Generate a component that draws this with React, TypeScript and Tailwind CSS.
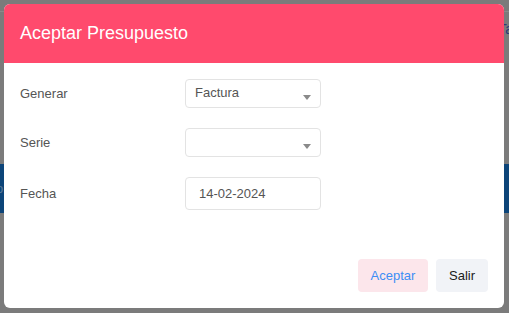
import React from "react";

function Caret() {
  return (
    <svg width="8" height="5" viewBox="0 0 8 5" className="absolute right-[9px] top-[15px]">
      <path d="M0 0 L8 0 L4 5 Z" fill="#8a8a8a" />
    </svg>
  );
}

export default function App() {
  return (
    <div
      className="relative w-[509px] h-[313px] overflow-hidden bg-[#7b7b7b]"
      style={{ fontFamily: '"Liberation Sans", Arial, sans-serif' }}
    >
      {/* background page */}
      <div className="h-[12px] border-b border-[#8a8a8a]" />
      <div className="flex justify-end pr-0 mt-[10px] h-[14px] text-[14px] leading-[14px] text-[#2a3a7a]">
        <span className="-mr-[4px]">Ta</span>
      </div>
      <div className="mt-[128px] h-[49px] bg-[#0d4579] flex items-center text-[13px] text-[#5a7a9a]">
        <span className="-ml-[4px]">o</span>
      </div>

      {/* modal */}
      <div className="absolute left-[4px] top-[4px] w-[500px] h-[304px] bg-white rounded-[6px] overflow-hidden flex flex-col">
        <div className="h-[59px] bg-[#ff4a6d] flex items-center px-[16px] shrink-0">
          <h2 className="text-white text-[18px] leading-[20px] pb-[1px]">Aceptar Presupuesto</h2>
        </div>
        <div className="flex flex-col px-[16px] pt-[16px] gap-[20px] text-[13px] text-[#555555]">
          <div className="flex items-center h-[29px]">
            <span className="w-[165px]">Generar</span>
            <div className="relative w-[136px] h-[29px] border border-[#e3e3e3] rounded-[4px] pl-[9px] pt-[5px] leading-[15px] text-[#555]">
              Factura
              <Caret />
            </div>
          </div>
          <div className="flex items-center h-[29px]">
            <span className="w-[165px]">Serie</span>
            <div className="relative w-[136px] h-[29px] border border-[#e3e3e3] rounded-[4px]">
              <Caret />
            </div>
          </div>
          <div className="flex items-center h-[33px]">
            <span className="w-[165px]">Fecha</span>
            <div className="w-[136px] h-[33px] border border-[#e3e3e3] rounded-[4px] pl-[13px] flex items-center text-[#555]">
              14-02-2024
            </div>
          </div>
        </div>
        <div className="mt-auto flex justify-end gap-[8px] px-[16px] pb-[16px]">
          <button className="w-[70px] h-[33px] rounded-[4px] bg-[#fce6eb] text-[#3d8ef5] text-[13px]">
            Aceptar
          </button>
          <button className="w-[52px] h-[33px] rounded-[4px] bg-[#f1f3f7] text-[#1a1a1a] text-[13px]">
            Salir
          </button>
        </div>
      </div>
    </div>
  );
}
